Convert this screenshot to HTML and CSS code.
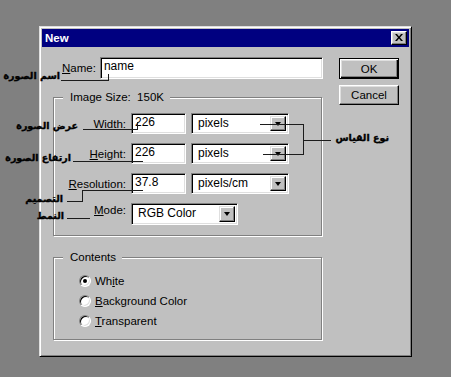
FILE: index.html
```html
<!DOCTYPE html>
<html>
<head>
    <title>New</title>
    <link rel="stylesheet" href="styles.css">
</head>
<body>
<div class="canvas">
    <div class="dialog">
        <div class="titlebar">
            <span>New</span>
            <button class="close">
                <svg width="8" height="7" viewBox="0 0 8 7"><path d="M0 0H2L4 2.4L6 0H8L5 3.5L8 7H6L4 4.6L2 7H0L3 3.5Z" fill="#000"/></svg>
            </button>
        </div>
        <div class="body">
            <div class="main">
                <div class="name-row">
                    <label><u>N</u>ame:</label>
                    <input class="field name" type="text" value="name">
                </div>

                <div class="group size">
                    <div class="group-title">Image Size:&nbsp; 150K</div>
                    <div class="rows">
                        <label><u>W</u>idth:</label>
                        <input class="field num" type="text" value="226">
                        <div class="select"><span>pixels</span><i class="arrow"></i></div>

                        <label><u>H</u>eight:</label>
                        <input class="field num" type="text" value="226">
                        <div class="select"><span>pixels</span><i class="arrow"></i></div>

                        <label><u>R</u>esolution:</label>
                        <input class="field num" type="text" value="37.8">
                        <div class="select"><span>pixels/cm</span><i class="arrow"></i></div>

                        <label><u>M</u>ode:</label>
                        <div class="select mode"><span>RGB Color</span><i class="arrow"></i></div>
                    </div>
                </div>

                <div class="group contents">
                    <div class="group-title">Contents</div>
                    <div class="radios">
                        <div class="radio-row"><span class="radio checked"></span><span>Wh<u>i</u>te</span></div>
                        <div class="radio-row"><span class="radio"></span><span><u>B</u>ackground Color</span></div>
                        <div class="radio-row"><span class="radio"></span><span><u>T</u>ransparent</span></div>
                    </div>
                </div>
            </div>

            <div class="buttons">
                <button class="btn default">OK</button>
                <button class="btn">Cancel</button>
            </div>
        </div>
    </div>

    <!-- ملاحظات الشرح -->
    <svg class="notes" width="451" height="377">
        <path d="M61 80.5H108.5V74" />
        <path d="M83 129.5H137.5V122" />
        <path d="M73 161.5H143" />
        <path d="M67 201.5H82.5V190.5H143" />
        <path d="M67 218.5H90" />
        <path d="M260 124.5H303.5V154.5H263M303.5 140.5H331" />
    </svg>
    <span class="note" style="right:391px; top:69px">اسم الصورة</span>
    <span class="note" style="right:373px; top:119px">عرض الصورة</span>
    <span class="note" style="right:380px; top:151px">ارتفاع الصورة</span>
    <span class="note" style="right:388px; top:192px">التصميم</span>
    <span class="note" style="right:387px; top:209px">النمط</span>
    <span class="note" style="right:62px; top:131px">نوع القياس</span>
</div>
</body>
</html>
```

FILE: styles.css
```css
/* Estilo general */
* {
    box-sizing: border-box;
}
body {
    margin: 0;
    background-color: #808080;
    font-family: "Liberation Sans", Arial, sans-serif;
    font-size: 11.5px;
    color: #000;
}
.canvas {
    position: relative;
    width: 451px;
    height: 377px;
    overflow: hidden;
    padding: 26px 0 0 39px;
}

/* ventana */
.dialog {
    width: 373px;
    height: 331px;
    background-color: #c0c0c0;
    border: 1px solid;
    border-color: #dfdfdf #000 #000 #dfdfdf;
    box-shadow: inset 1px 1px #fff, inset -1px -1px #808080;
    padding: 2px;
}
.titlebar {
    height: 18px;
    background-color: #000080;
    color: #fff;
    font-weight: bold;
    line-height: 13px;
    display: flex;
    align-items: center;
    justify-content: space-between;
    padding: 0 2px 0 3px;
}
.close {
    width: 16px;
    height: 14px;
    padding: 0;
    background-color: #c0c0c0;
    border: 1px solid;
    border-color: #fff #000 #000 #fff;
    box-shadow: inset -1px -1px #808080, inset 1px 1px #dfdfdf;
    display: flex;
    align-items: center;
    justify-content: center;
}
.close svg {
    display: block;
    margin: 0 0 1px 0;
}

.body {
    display: flex;
    gap: 16px;
    padding: 10px 0 0 11px;
}
.main {
    width: 270px;
}
.name-row {
    display: flex;
    align-items: center;
    gap: 4px;
    padding-left: 9px;
    line-height: 13px;
}

/* campos */
.field {
    font-family: inherit;
    font-size: 12px;
    line-height: 14px;
    color: #000;
    background-color: #fff;
    border: 1px solid;
    border-color: #808080 #fff #fff #808080;
    box-shadow: inset 1px 1px #000, inset -1px -1px #dfdfdf;
    padding: 0 2px 4px 3px;
    margin: 0;
    outline: none;
}
.field.name {
    width: 223px;
    height: 22px;
    padding-left: 3px;
}
.field.num {
    width: 55px;
    height: 21px;
}
.select {
    width: 98px;
    height: 21px;
    background-color: #fff;
    border: 1px solid;
    border-color: #808080 #fff #fff #808080;
    box-shadow: inset 1px 1px #000, inset -1px -1px #dfdfdf;
    padding: 2px;
    display: flex;
    font-size: 12px;
    line-height: 14px;
}
.select span {
    flex: 1;
    padding-left: 4px;
}
.select.mode {
    grid-column: span 2;
    width: 107px;
    height: 22px;
}
.arrow {
    width: 16px;
    background-color: #c0c0c0;
    border: 1px solid;
    border-color: #dfdfdf #000 #000 #dfdfdf;
    box-shadow: inset -1px -1px #808080, inset 1px 1px #fff;
    display: flex;
    align-items: center;
    justify-content: center;
}
.arrow::after {
    content: "";
    border-left: 3.5px solid transparent;
    border-right: 3.5px solid transparent;
    border-top: 4px solid #000;
}

/* grupos */
.group {
    border: 1px solid #808080;
    box-shadow: inset 1px 1px #fff, 1px 1px #fff;
    width: 269px;
}
.group-title {
    width: fit-content;
    margin: -7px 0 0 9px;
    padding: 0 6px 0 7px;
    background-color: #c0c0c0;
    line-height: 13px;
}
.size {
    margin-top: 18px;
    padding-bottom: 11px;
}
.rows {
    display: grid;
    grid-template-columns: 72px 55px 98px;
    grid-auto-rows: 21px;
    column-gap: 5px;
    row-gap: 9px;
    margin-top: 9px;
    align-items: center;
    line-height: 13px;
}
.rows > :nth-last-child(-n+2) {
    align-self: start;
}
.rows label {
    text-align: right;
    padding-top: 1px;
}
.contents {
    margin-top: 21px;
    padding-bottom: 8px;
}
.radios {
    margin-top: 7px;
}
.radio-row {
    height: 20px;
    display: flex;
    align-items: center;
    gap: 4px;
    padding-left: 25px;
    line-height: 13px;
}
.radio {
    width: 12px;
    height: 12px;
    border-radius: 50%;
    background-color: #fff;
    border: 1px solid;
    border-color: #808080 #fff #fff #808080;
    box-shadow: inset 1px 1px #000, inset -1px -1px #dfdfdf;
    display: flex;
    align-items: center;
    justify-content: center;
}
.radio.checked::after {
    content: "";
    width: 4px;
    height: 4px;
    border-radius: 50%;
    background-color: #000;
}

/* botones */
.buttons {
    display: flex;
    flex-direction: column;
    padding-top: 1px;
}
.btn {
    width: 60px;
    height: 20px;
    padding: 0;
    font-family: inherit;
    font-size: 11.5px;
    color: #000;
    background-color: #c0c0c0;
    border: 1px solid;
    border-color: #fff #000 #000 #fff;
    box-shadow: inset -1px -1px #808080, inset 1px 1px #dfdfdf;
}
.btn.default {
    height: 21px;
    border-color: #000;
    box-shadow: inset 1px 1px #fff, inset -1px -1px #000, inset -2px -2px #808080, inset 2px 2px #dfdfdf;
    margin-bottom: 6px;
}

/* notas */
.notes {
    position: absolute;
    left: 0;
    top: 0;
    pointer-events: none;
}
.notes path {
    fill: none;
    stroke: #1c1c1c;
    stroke-width: 1;
    shape-rendering: crispEdges;
}
.note {
    position: absolute;
    font-family: "DejaVu Sans", sans-serif;
    font-weight: bold;
    font-size: 9.5px;
    line-height: 14px;
    direction: rtl;
    white-space: nowrap;
    color: #000;
    -webkit-text-stroke: 0.35px #000;
}
```
